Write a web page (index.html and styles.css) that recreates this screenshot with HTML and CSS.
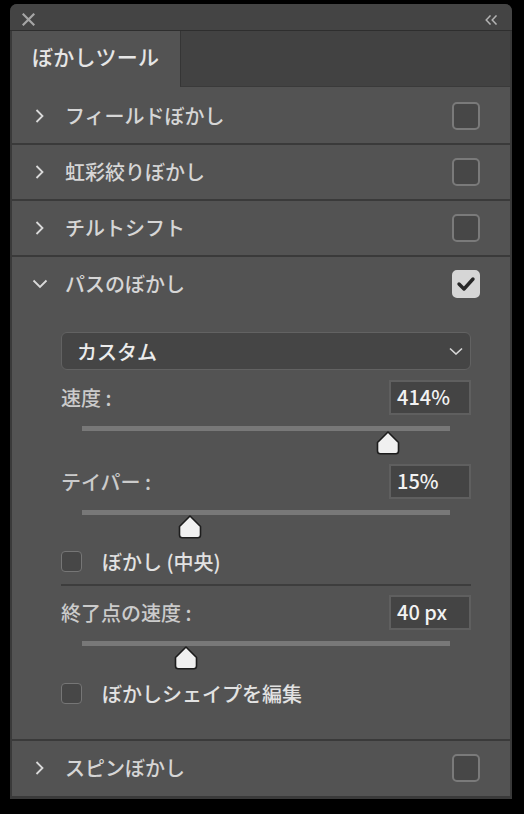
FILE: index.html
```html
<!DOCTYPE html>
<html lang="ja">
<head>
<meta charset="utf-8">
<link rel="stylesheet" href="styles.css">
</head>
<body>
<div class="panel">
  <div class="titlebar">
    <svg class="close" width="13" height="13" viewBox="0 0 13 13"><path d="M1.5 1.5 L11.5 11.5 M11.5 1.5 L1.5 11.5" /></svg>
    <svg class="collapse" width="14" height="10" viewBox="0 0 14 10"><path d="M6 1 L2.2 5 L6 9 M12 1 L8.2 5 L12 9" /></svg>
  </div>
  <div class="frame">
    <div class="tabbar">
      <div class="tab">ぼかしツール</div>
      <div class="tabrest"></div>
    </div>
    <div class="content">
      <div class="section">
        <div class="head">
          <svg class="chev" width="16" height="16" viewBox="0 0 16 16"><path d="M4.5 2 L10.5 8 L4.5 14" /></svg>
          <span class="title">フィールドぼかし</span>
          <span class="box"></span>
        </div>
      </div>
      <div class="section">
        <div class="head">
          <svg class="chev" width="16" height="16" viewBox="0 0 16 16"><path d="M4.5 2 L10.5 8 L4.5 14" /></svg>
          <span class="title">虹彩絞りぼかし</span>
          <span class="box"></span>
        </div>
      </div>
      <div class="section">
        <div class="head">
          <svg class="chev" width="16" height="16" viewBox="0 0 16 16"><path d="M4.5 2 L10.5 8 L4.5 14" /></svg>
          <span class="title">チルトシフト</span>
          <span class="box"></span>
        </div>
      </div>
      <div class="section open">
        <div class="head">
          <svg class="chev" width="16" height="16" viewBox="0 0 16 16"><path d="M1.5 4.5 L8 11 L14.5 4.5" /></svg>
          <span class="title">パスのぼかし</span>
          <span class="box checked"><svg width="28" height="28" viewBox="0 0 28 28"><path d="M7 14 L12 19 L21 9" /></svg></span>
        </div>
        <div class="body">
          <div class="select">
            <span>カスタム</span>
            <svg width="14" height="8" viewBox="0 0 14 8"><path d="M1 1.5 L7 7 L13 1.5" /></svg>
          </div>
          <div class="field first">
            <span class="label">速度&nbsp;:</span>
            <span class="input">414%</span>
          </div>
          <div class="slider">
            <div class="track"></div>
            <div class="thumbarea">
              <svg class="thumb" style="left: calc(83.2% - 12px)" width="24" height="24" viewBox="0 0 24 24"><path d="M12 1 L22.5 11.5 L22.5 20 Q22.5 22.8 19.7 22.8 L4.3 22.8 Q1.5 22.8 1.5 20 L1.5 11.5 Z" /></svg>
            </div>
          </div>
          <div class="field">
            <span class="label">テイパー&nbsp;:</span>
            <span class="input">15%</span>
          </div>
          <div class="slider">
            <div class="track"></div>
            <div class="thumbarea">
              <svg class="thumb" style="left: calc(29.3% - 12px)" width="24" height="24" viewBox="0 0 24 24"><path d="M12 1 L22.5 11.5 L22.5 20 Q22.5 22.8 19.7 22.8 L4.3 22.8 Q1.5 22.8 1.5 20 L1.5 11.5 Z" /></svg>
            </div>
          </div>
          <div class="check">
            <span class="smallbox"></span>
            <span class="checklabel">ぼかし (中央)</span>
          </div>
          <div class="divider"></div>
          <div class="field">
            <span class="label">終了点の速度&nbsp;:</span>
            <span class="input">40 px</span>
          </div>
          <div class="slider">
            <div class="track"></div>
            <div class="thumbarea">
              <svg class="thumb" style="left: calc(28.3% - 12px)" width="24" height="24" viewBox="0 0 24 24"><path d="M12 1 L22.5 11.5 L22.5 20 Q22.5 22.8 19.7 22.8 L4.3 22.8 Q1.5 22.8 1.5 20 L1.5 11.5 Z" /></svg>
            </div>
          </div>
          <div class="check last">
            <span class="smallbox"></span>
            <span class="checklabel">ぼかしシェイプを編集</span>
          </div>
        </div>
      </div>
      <div class="section">
        <div class="head">
          <svg class="chev" width="16" height="16" viewBox="0 0 16 16"><path d="M4.5 2 L10.5 8 L4.5 14" /></svg>
          <span class="title">スピンぼかし</span>
          <span class="box"></span>
        </div>
      </div>
    </div>
  </div>
</div>
</body>
</html>
```
FILE: styles.css
```css
html, body {
  margin: 0;
  padding: 0;
  background: #000;
}
body {
  font-family: "Noto Sans CJK JP", "Noto Sans", sans-serif;
  font-weight: 500;
  width: 524px;
  height: 814px;
  overflow: hidden;
}
.panel {
  margin: 4px 0 0 10px;
  width: 502px;
  height: 795px;
  background: #3a3a3a;
  border-radius: 7px 7px 0 0;
  display: flex;
  flex-direction: column;
}
.titlebar {
  height: 27px;
  box-sizing: border-box;
  background: #444;
  border-radius: 7px 7px 0 0;
  border-bottom: 1px solid #2e2e2e;
  display: flex;
  align-items: center;
  justify-content: space-between;
  padding: 5px 14px 0 12px;
  flex: none;
}
.titlebar svg path {
  fill: none;
  stroke-linecap: square;
}
.close path {
  stroke: #a6a6a6;
  stroke-width: 2.2;
}
.collapse path {
  stroke: #b3b3b3;
  stroke-width: 1.5;
  stroke-linecap: butt;
}
.frame {
  padding: 0 2px 3px 2px;
  display: flex;
  flex-direction: column;
  flex: 1;
}
.tabbar {
  height: 56px;
  display: flex;
  flex: none;
}
.tab {
  width: 168px;
  background: #535353;
  color: #e6e6e6;
  font-size: 21px;
  line-height: 50px;
  padding-left: 20px;
  box-sizing: border-box;
  letter-spacing: 0.2px;
}
.tabrest {
  flex: 1;
  background: #424242;
  border-left: 1px solid #353535;
  border-bottom: 1px solid #3a3a3a;
}
.content {
  flex: 1;
  background: #535353;
  padding-top: 2px;
}
.section + .section {
  border-top: 2px solid #3a3a3a;
}
.head {
  height: 54px;
  display: flex;
  align-items: center;
  padding: 0 30px 0 20px;
  color: #d6d6d6;
}
.chev {
  flex: none;
}
.chev path {
  fill: none;
  stroke: #dadada;
  stroke-width: 1.8;
}
.title {
  flex: 1;
  margin-left: 17px;
  font-size: 20px;
  line-height: 28px;
}
.box {
  width: 28px;
  height: 28px;
  box-sizing: border-box;
  border: 2px solid #7a7a7a;
  border-radius: 5px;
  background: #474747;
  flex: none;
  display: block;
}
.box.checked {
  background: #d6d6d6;
  border-color: #d6d6d6;
  position: relative;
}
.box.checked svg {
  position: absolute;
  left: -2px;
  top: -2px;
}
.box.checked path {
  fill: none;
  stroke: #272727;
  stroke-width: 3.4;
  stroke-linecap: round;
  stroke-linejoin: round;
}
.body {
  padding: 21px 39px 35px 49px;
}
.select {
  height: 38px;
  box-sizing: border-box;
  border: 1.5px solid #626262;
  border-radius: 6px;
  background: #454545;
  display: flex;
  align-items: center;
  justify-content: space-between;
  padding: 0 7px 0 15px;
  color: #ececec;
  font-size: 20px;
}
.select path {
  fill: none;
  stroke: #d8d8d8;
  stroke-width: 1.6;
}
.field {
  height: 35px;
  margin-top: 9px;
  display: flex;
  align-items: center;
  justify-content: space-between;
}
.field.first {
  margin-top: 10px;
}
.label {
  color: #cbcbcb;
  font-size: 20px;
}
.input {
  width: 82px;
  height: 35px;
  box-sizing: border-box;
  border: 2px solid #5f5f5f;
  background: #444;
  color: #f2f2f2;
  font-size: 20px;
  line-height: 30px;
  padding-left: 6px;
}
.slider {
  margin-top: 11px;
  padding: 0 21px;
}
.track {
  height: 5px;
  background: #787878;
}
.thumbarea {
  position: relative;
  height: 24px;
}
.thumb {
  position: absolute;
  top: 0;
}
.thumb path {
  fill: #f0f0f0;
  stroke: #1d1d1d;
  stroke-width: 1.6;
  stroke-linejoin: round;
}
.check {
  margin-top: 11px;
  height: 22px;
  display: flex;
  align-items: center;
}
.check.last {
  margin-top: 12px;
}
.smallbox {
  width: 21px;
  height: 21px;
  box-sizing: border-box;
  border: 1.5px solid #767676;
  border-radius: 4px;
  background: #474747;
  flex: none;
}
.checklabel {
  margin-left: 20px;
  font-size: 20px;
  color: #e2e2e2;
}
.divider {
  margin-top: 12px;
  height: 2px;
  background: #3d3d3d;
}
```
